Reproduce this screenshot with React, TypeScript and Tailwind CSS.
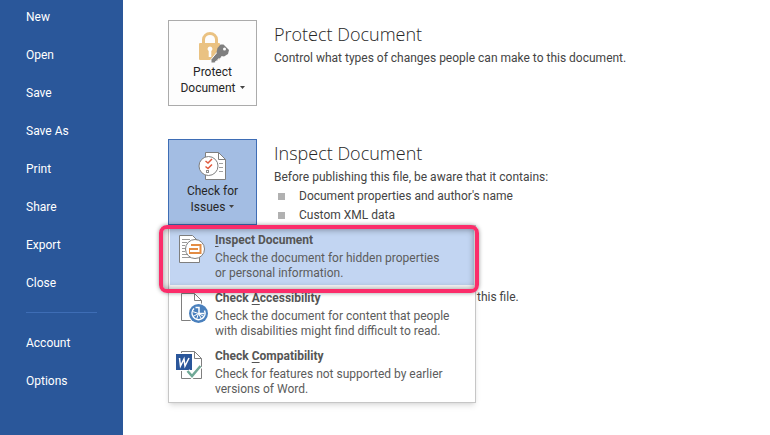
import React from "react";

const NAV_ITEMS = ["New", "Open", "Save", "Save As", "Print", "Share", "Export", "Close"];
const NAV_FOOTER = ["Account", "Options"];

const LockIcon = () => (
  <svg className="w-8 h-8" viewBox="0 0 32 32" fill="none" aria-hidden="true">
    <path d="M6.500 12V7.500a6.500 6 0 0 1 13 0V12" stroke="#eac282" strokeWidth="3" />
    <rect x="2" y="11" width="21" height="17" rx="1" fill="#eac282" />
    <path d="M13 14.500a2.500 2.500 0 0 0-1.300 4.600V25h2.600v-5.900a2.500 2.500 0 0 0-1.300-4.600z" fill="#fff" />
    <path
      d="m22 18-8 9.500V31h4l1-2h2v-2h2l3-4z"
      fill="#7f7f7f"
      stroke="#fdfdfd"
      strokeWidth="1"
    />
    <path d="M23.500 12.500h3l5.500 5.500-1 4-4 2.500-5-1-2.500-3 1-4.500z" fill="#7f7f7f" />
    <circle cx="27.500" cy="17" r="1.500" fill="#fdfdfd" />
  </svg>
);

const IssuesIcon = () => (
  <svg className="w-8 h-8" viewBox="0 0 32 32" fill="none" aria-hidden="true">
    <path d="M8.500 1.500h13l7 7v20h-20z" fill="#fff" stroke="#7f7f7f" />
    <path d="M21.500 1.500v7h7" stroke="#7f7f7f" />
    <path d="M22 12.500h4M22 16.500h4M22 20.500h4" stroke="#a0a0a0" />
    <circle cx="11.500" cy="15" r="9.500" fill="#fff" stroke="#7f7f7f" />
    <path d="m8.500 10 2.500 2 4-4M8.500 15.500l2.500 2 4-4" stroke="#e0593c" strokeWidth="1.500" />
    <rect x="9.500" y="19.500" width="2" height="2" stroke="#8c8c8c" />
  </svg>
);

const InspectIcon = () => (
  <svg className="w-8 h-8" viewBox="0 0 32 32" fill="none" aria-hidden="true">
    <path d="M3.500 1.500h13l7 7v20h-20z" fill="#fff" stroke="#7f7f7f" />
    <path
      d="M6 5.500h8M6 8.500h5M6 11.500h3M6 14.500h3M6 17.500h3M6 20.500h5M6 23.500h9"
      stroke="#9a9a9a"
    />
    <circle cx="19" cy="15" r="9.500" fill="#fff" stroke="#7f7f7f" />
    <path d="M15 11h9.500v8H13" stroke="#e38c43" strokeWidth="2" />
    <path d="M13 15h9" stroke="#e38c43" strokeWidth="2" />
    <path d="M13.500 14v6" stroke="#e38c43" />
  </svg>
);

const AccessibilityIcon = () => (
  <svg className="w-8 h-8" viewBox="0 0 32 32" fill="none" aria-hidden="true">
    <path d="M5.500 1.500h13l7 7v20h-20z" fill="#fff" stroke="#7f7f7f" />
    <path d="M18.500 1.500v7h7" stroke="#7f7f7f" />
    <circle cx="22.500" cy="21.500" r="10.500" fill="#fff" />
    <circle cx="22.500" cy="21.500" r="9.500" fill="#4a80bd" />
    <path d="M18 16.500a6.500 6.500 0 1 0 10.500 2" stroke="#fff" strokeWidth="1.500" />
    <path d="M19.500 15.500h3.500v6h5.500" stroke="#fff" strokeWidth="1.500" />
    <path
      d="m22.500 21.500-6-2M22.500 21.500l-5.500 3M22.500 21.500l-2 6M22.500 21.500l3 5.500M22.500 21.500l5.500 3"
      stroke="#fff"
    />
  </svg>
);

const CompatibilityIcon = () => (
  <svg className="w-8 h-8" viewBox="0 0 32 32" fill="none" aria-hidden="true">
    <path d="M5.500 1.500h13l7 7v20h-20z" fill="#fff" stroke="#7f7f7f" />
    <path d="M18.500 1.500v7h7" stroke="#7f7f7f" />
    <rect x="0" y="3" width="17" height="18" fill="#fff" />
    <rect x="0" y="4" width="16" height="16" fill="#2a569a" />
    <path d="m3.500 8 1 8 3.500-7 1 7 4-8" stroke="#fff" strokeWidth="1.500" />
    <path d="m11.500 21 4.500 5 8.500-10" stroke="#fff" strokeWidth="5" />
    <path d="m11.500 21 4.500 5 8.500-10" stroke="#6fa896" strokeWidth="2.500" />
  </svg>
);

const MENU_ITEMS = [
  {
    id: "inspect",
    before: "",
    hotkey: "I",
    after: "nspect Document",
    lines: ["Check the document for hidden properties", "or personal information."],
    icon: InspectIcon,
    active: true,
  },
  {
    id: "accessibility",
    before: "Check ",
    hotkey: "A",
    after: "ccessibility",
    lines: ["Check the document for content that people", "with disabilities might find difficult to read."],
    icon: AccessibilityIcon,
    active: false,
  },
  {
    id: "compatibility",
    before: "Check ",
    hotkey: "C",
    after: "ompatibility",
    lines: ["Check for features not supported by earlier", "versions of Word."],
    icon: CompatibilityIcon,
    active: false,
  },
];

const NavLink = ({ label }: { label: string }) => (
  <a href="#" className="flex items-center h-[34px] pl-[26px] text-white">
    {label}
  </a>
);

const Caret = () => (
  <svg className="inline-block w-[5px] h-[3px] ml-1 mb-0.5" viewBox="0 0 5 3" aria-hidden="true">
    <path d="M0 0h5L2.500 3z" fill="#444" />
  </svg>
);

const SectionTitle = ({ children }: { children: React.ReactNode }) => (
  <h2 className="mb-px font-['Open_Sans',sans-serif] font-light text-lg leading-7 text-[#262626]">
    {children}
  </h2>
);

type TileProps = {
  icon: () => React.ReactElement;
  lines: [string, string];
  open?: boolean;
};

const TileButton = ({ icon, lines, open }: TileProps) => (
  <button
    type="button"
    aria-haspopup="menu"
    aria-expanded={!!open}
    className={`flex flex-col items-center w-[89px] h-[86px] pt-[11px] border leading-4 text-[#262626] ${
      open ? "bg-[#a3bde3] border-[#3e6db5]" : "bg-[#fdfdfd] border-[#ababab]"
    }`}
  >
    {icon()}
    <span>{lines[0]}</span>
    <span>
      {lines[1]}
      <Caret />
    </span>
  </button>
);

const IssuesMenu = () => (
  <div
    role="menu"
    className="absolute top-full left-0 z-10 flex flex-col gap-0.5 w-[308px] pt-[3px] pb-px bg-white border border-[#c6c6c6] shadow-md"
  >
    {MENU_ITEMS.map((item) => (
      <div key={item.id} className="relative px-px">
        <button
          type="button"
          role="menuitem"
          className={`flex items-start gap-[7px] w-full h-14 pt-px pl-1.5 text-left text-[#5c5c5c] ${
            item.active ? "bg-[#c2d5f2]" : "bg-white"
          }`}
        >
          <span className="mt-1 shrink-0">{item.icon()}</span>
          <span className="block whitespace-nowrap">
            <span className="block mb-px font-bold leading-5 text-[#555]">
              {item.before}
              <span className="underline underline-offset-2">{item.hotkey}</span>
              {item.after}
            </span>
            {item.lines.map((line) => (
              <span key={line} className="block leading-[15px]">
                {line}
              </span>
            ))}
          </span>
        </button>
        {item.active && (
          <div className="absolute z-10 -top-1 -bottom-2 -left-[10px] -right-1 rounded-lg border-4 border-[#fb2d6a] pointer-events-none shadow-[0_0_4px_rgba(0,0,0,0.4),inset_0_0_7px_rgba(0,0,0,0.45)]" />
        )}
      </div>
    ))}
  </div>
);

const App = () => {
  return (
    <div className="flex min-h-screen bg-white text-xs text-[#444] font-['Roboto','Open_Sans',sans-serif]">
      <nav className="flex flex-col gap-1 w-[123px] shrink-0 bg-[#2a579a]">
        {NAV_ITEMS.map((label) => (
          <NavLink key={label} label={label} />
        ))}
        <hr className="mt-2 mb-[9px] mx-[26px] border-[#3e6db5]" />
        {NAV_FOOTER.map((label) => (
          <NavLink key={label} label={label} />
        ))}
      </nav>

      <main className="flex-1 flex flex-col gap-[33px] pt-5 pl-[45px]">
        <section className="flex gap-[17px]">
          <TileButton icon={LockIcon} lines={["Protect", "Document"]} />
          <div>
            <SectionTitle>Protect Document</SectionTitle>
            <p className="leading-[19px]">
              Control what types of changes people can make to this document.
            </p>
          </div>
        </section>

        <section className="flex gap-[17px]">
          <div className="relative self-start">
            <TileButton icon={IssuesIcon} lines={["Check for", "Issues"]} open />
            <IssuesMenu />
          </div>
          <div className="leading-[19px]">
            <SectionTitle>Inspect Document</SectionTitle>
            <p>Before publishing this file, be aware that it contains:</p>
            <ul>
              {["Document properties and author's name", "Custom XML data"].map((text) => (
                <li key={text} className="flex items-center gap-[14px] pl-1">
                  <span className="w-[7px] h-[7px] bg-[#b1b1b1]" />
                  {text}
                </li>
              ))}
            </ul>
            <p className="mt-[63px] pl-[203px]">this file.</p>
          </div>
        </section>
      </main>
    </div>
  );
};

export default App;
